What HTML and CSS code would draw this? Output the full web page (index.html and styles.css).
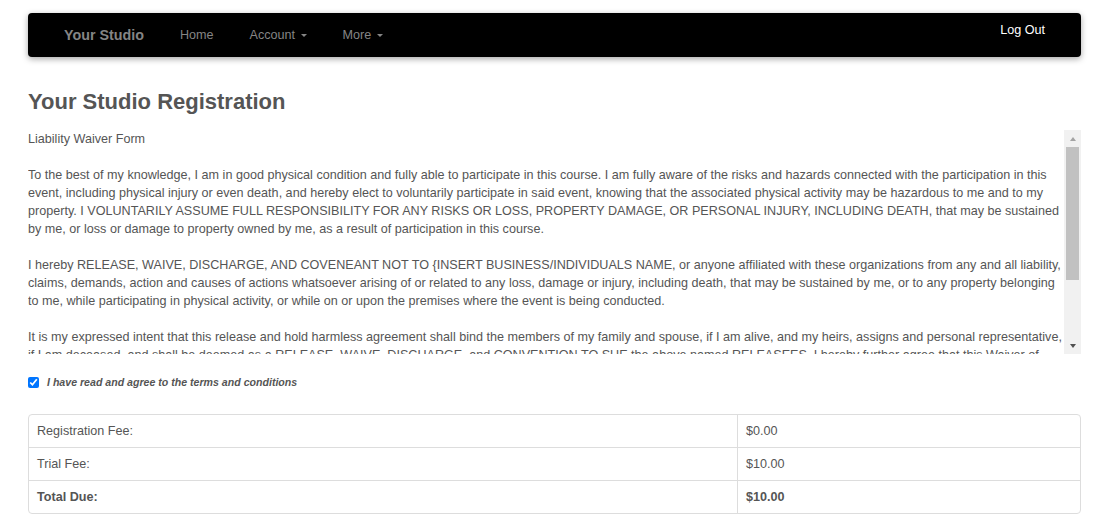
FILE: index.html
```html
<!DOCTYPE html>
<html lang="en">
<head>
<meta charset="utf-8">
<title>Your Studio Registration</title>
<link rel="stylesheet" href="styles.css">
</head>
<body>
<div class="page">
  <nav class="navbar">
    <a class="brand">Your Studio</a>
    <a class="nav-link">Home</a>
    <a class="nav-link">Account <span class="caret"></span></a>
    <a class="nav-link">More <span class="caret"></span></a>
    <a class="nav-link logout">Log Out</a>
  </nav>

  <h1 class="title">Your Studio Registration</h1>

  <div class="waiver">
    <div class="waiver-text">
      <p>Liability Waiver Form</p>
      <p>To the best of my knowledge, I am in good physical condition and fully able to participate in this course. I am fully aware of the risks and hazards connected with the participation in this event, including physical injury or even death, and hereby elect to voluntarily participate in said event, knowing that the associated physical activity may be hazardous to me and to my property. I VOLUNTARILY ASSUME FULL RESPONSIBILITY FOR ANY RISKS OR LOSS, PROPERTY DAMAGE, OR PERSONAL INJURY, INCLUDING DEATH, that may be sustained by me, or loss or damage to property owned by me, as a result of participation in this course.</p>
      <p>I hereby RELEASE, WAIVE, DISCHARGE, AND COVENEANT NOT TO {INSERT BUSINESS/INDIVIDUALS NAME, or anyone affiliated with these organizations from any and all liability, claims, demands, action and causes of actions whatsoever arising of or related to any loss, damage or injury, including death, that may be sustained by me, or to any property belonging to me, while participating in physical activity, or while on or upon the premises where the event is being conducted.</p>
      <p>It is my expressed intent that this release and hold harmless agreement shall bind the members of my family and spouse, if I am alive, and my heirs, assigns and personal representative, if I am deceased, and shall be deemed as a RELEASE, WAIVE, DISCHARGE, and CONVENTION TO SUE the above named RELEASEES. I hereby further agree that this Waiver of Liability and Hold Harmless Agreement shall be construed in accordance with the laws of the State of {INSERT STATE}.</p>
      <p>In signing this release, I acknowledge and represent that I have read the foregoing Waiver of Liability and Hold Harmless Agreement, understand it and sign it voluntarily as my own free act and deed; no oral representations, statements, or inducements, apart from the foregoing written agreement, have been made; I am at least eighteen (18) years of age and fully competent; and I execute this Release for full, adequate and complete consideration fully intending to be bound by same.</p>
    </div>
    <div class="scrollbar" aria-hidden="true">
      <span class="sb-btn"><span class="arrow-up"></span></span>
      <span class="sb-thumb"></span>
      <span class="sb-track"></span>
      <span class="sb-btn"><span class="arrow-down"></span></span>
    </div>
  </div>

  <label class="agree">
    <input type="checkbox" class="agree-box" checked>
    <span class="agree-text">I have read and agree to the terms and conditions</span>
  </label>

  <table class="fees">
    <tr>
      <td class="fee-label">Registration Fee:</td>
      <td class="fee-value">$0.00</td>
    </tr>
    <tr>
      <td class="fee-label">Trial Fee:</td>
      <td class="fee-value">$10.00</td>
    </tr>
    <tr class="total">
      <td class="fee-label">Total Due:</td>
      <td class="fee-value">$10.00</td>
    </tr>
  </table>
</div>
</body>
</html>
```

FILE: styles.css
```css
html, body {
  margin: 0;
  padding: 0;
  background: #fff;
}

body {
  font-family: "Liberation Sans", Arial, sans-serif;
  font-size: 12.6px;
  line-height: 18px;
  color: #555;
}

.page {
  width: 1053px;
  margin-left: 28px;
  padding-top: 13px;
}

/* Navbar */
.navbar {
  height: 44px;
  background: #000;
  border-radius: 4px;
  box-shadow: 0 2px 6px rgba(0, 0, 0, 0.35);
  display: flex;
  align-items: center;
  padding: 0 18px;
}

.brand {
  font-weight: bold;
  font-size: 14.3px;
  color: #858585;
  padding: 0 18px;
}

.nav-link {
  font-size: 12.6px;
  color: #858585;
  padding: 0 18px;
  white-space: nowrap;
}

.caret {
  display: inline-block;
  width: 0;
  height: 0;
  margin-left: 2px;
  vertical-align: middle;
  border-top: 3.6px solid;
  border-left: 3.6px solid transparent;
  border-right: 3.6px solid transparent;
}

.logout {
  margin-left: auto;
  color: #fff;
  margin-bottom: 11px;
}

/* Heading */
.title {
  font-size: 22px;
  line-height: 24px;
  font-weight: bold;
  color: #555;
  margin: 33px 0 16px;
}

/* Waiver scroll box */
.waiver {
  display: flex;
  height: 224px;
}

.waiver-text {
  flex: 1;
  min-width: 0;
  overflow: hidden;
}

.waiver-text p {
  margin: 0;
}

.waiver-text p + p {
  margin-top: 18px;
}

.scrollbar {
  width: 17px;
  flex: none;
  background: #f1f1f1;
  display: flex;
  flex-direction: column;
}

.sb-btn {
  height: 17px;
  flex: none;
  display: flex;
  align-items: center;
  justify-content: center;
}

.arrow-up {
  width: 0;
  height: 0;
  border-bottom: 4px solid #a3a3a3;
  border-left: 3.5px solid transparent;
  border-right: 3.5px solid transparent;
}

.arrow-down {
  width: 0;
  height: 0;
  border-top: 4px solid #505050;
  border-left: 3.5px solid transparent;
  border-right: 3.5px solid transparent;
}

.sb-thumb {
  height: 133px;
  flex: none;
  margin: 0 2px;
  background: #c1c1c1;
}

.sb-track {
  flex: 1;
}

/* Agreement */
.agree {
  display: flex;
  align-items: center;
  gap: 8px;
  margin-top: 20px;
  height: 16px;
}

.agree-box {
  width: 11px;
  height: 11px;
  margin: 0;
}

.agree-text {
  font-size: 10.6px;
  font-style: italic;
  font-weight: bold;
  color: #555;
}

/* Fees table */
.fees {
  width: 100%;
  margin-top: 24px;
  border-collapse: separate;
  border-spacing: 0;
  border: 1px solid #ddd;
  border-radius: 4px;
  table-layout: fixed;
}

.fees td {
  padding: 7px 8px;
  line-height: 18px;
  border-top: 1px solid #ddd;
  vertical-align: top;
}

.fees tr:first-child td {
  border-top: 0;
}

.fee-label {
  box-sizing: border-box;
  width: 708px;
}

.fee-value {
  border-left: 1px solid #ddd;
}

.total td {
  font-weight: bold;
}
```
